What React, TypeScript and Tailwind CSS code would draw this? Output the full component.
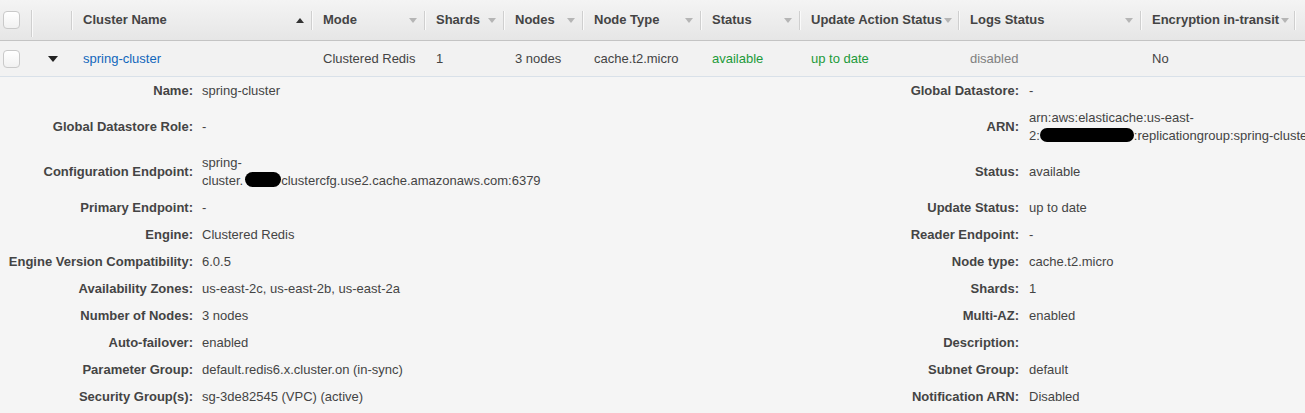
import React from "react";

const cols = [
  { w: 32, label: "", arrow: "none", kind: "check" },
  { w: 40, label: "", arrow: "none", kind: "blank" },
  { w: 240, label: "Cluster Name", arrow: "up" },
  { w: 113, label: "Mode", arrow: "down" },
  { w: 79, label: "Shards", arrow: "down" },
  { w: 79, label: "Nodes", arrow: "down" },
  { w: 118, label: "Node Type", arrow: "down" },
  { w: 99, label: "Status", arrow: "down" },
  { w: 159, label: "Update Action Status", arrow: "downTight" },
  { w: 182, label: "Logs Status", arrow: "down" },
  { w: 154, label: "Encryption in-transit", arrow: "downTight" },
];

function Checkbox() {
  return (
    <div className="w-[17px] h-[18px] rounded-[4px] border border-[#c9c9c9] bg-gradient-to-b from-white to-[#f1f1f1] shadow-[inset_0_1px_0_#fff]" />
  );
}

function DownArrow() {
  return (
    <div className="w-0 h-0 border-l-[4px] border-r-[4px] border-t-[5px] border-l-transparent border-r-transparent border-t-[#b5b5b5]" />
  );
}

function UpArrow() {
  return (
    <div className="w-0 h-0 border-l-[4px] border-r-[4px] border-b-[5px] border-l-transparent border-r-transparent border-b-[#333]" />
  );
}

function Sep({ tall }: { tall?: boolean }) {
  return (
    <div
      className={
        "w-px shrink-0 bg-[#cfcfcf] shadow-[1px_0_0_#fafafa] " +
        (tall ? "h-[27px] self-start mt-[10px]" : "h-[19px]")
      }
    />
  );
}

function Header() {
  return (
    <div className="flex h-[41px] items-center border-b border-[#c4c4c4] bg-gradient-to-b from-[#f4f4f4] to-[#e6e6e6]">
      {cols.map((c, i) => {
        if (c.kind === "check") {
          return (
            <div key={i} className="flex h-full items-center shrink-0" style={{ width: c.w }}>
              <div className="flex-1 flex pl-[3px]">
                <Checkbox />
              </div>
              <Sep tall />
            </div>
          );
        }
        if (c.kind === "blank") {
          return (
            <div key={i} className="flex h-full items-center shrink-0" style={{ width: c.w }}>
              <div className="flex-1" />
              <Sep />
            </div>
          );
        }
        return (
          <div key={i} className="flex h-full items-center shrink-0" style={{ width: c.w }}>
            <div className="flex-1 min-w-0 flex items-center pl-[11px] pr-[7px]">
              <span className="font-bold text-[#444] whitespace-nowrap">{c.label}</span>
              {c.arrow === "downTight" ? (
                <div className="ml-[2px]">
                  <DownArrow />
                </div>
              ) : (
                <>
                  <div className="flex-1" />
                  {c.arrow === "up" ? <UpArrow /> : <DownArrow />}
                </>
              )}
            </div>
            <Sep />
          </div>
        );
      })}
      <div className="flex-1" />
    </div>
  );
}

function Row() {
  const cell = "shrink-0 pl-[11px] whitespace-nowrap";
  return (
    <div className="flex h-[36px] items-center border-b border-[#d9e1e9] bg-[#f2f2f2]">
      <div className="shrink-0 w-[32px] pl-[3px]">
        <Checkbox />
      </div>
      <div className="shrink-0 w-[40px] flex justify-center pl-[1px]">
        <div className="w-0 h-0 border-l-[5px] border-r-[5px] border-t-[6px] border-l-transparent border-r-transparent border-t-[#222]" />
      </div>
      <div className={cell + " w-[240px] text-[#1166bb]"}>spring-cluster</div>
      <div className={cell + " w-[113px] pl-[10px]"}>Clustered Redis</div>
      <div className={cell + " w-[79px] pl-[10px]"}>1</div>
      <div className={cell + " w-[79px] pl-[10px]"}>3 nodes</div>
      <div className={cell + " w-[118px] pl-[10px]"}>cache.t2.micro</div>
      <div className={cell + " w-[99px] pl-[10px] text-[#1d9a3a]"}>available</div>
      <div className={cell + " w-[159px] pl-[10px] text-[#1d9a3a]"}>up to date</div>
      <div className={cell + " w-[182px] pl-[10px] text-[#808080]"}>disabled</div>
      <div className={cell + " w-[154px] pl-[10px]"}>No</div>
      <div className="flex-1" />
    </div>
  );
}

function Blob({ w, h }: { w: number; h: number }) {
  return (
    <span
      className="inline-block bg-black rounded-full align-middle"
      style={{ width: w, height: h, marginTop: -3 }}
    />
  );
}

type Pair = { label: string; value: React.ReactNode };

const left: Pair[] = [
  { label: "Name:", value: "spring-cluster" },
  { label: "Global Datastore Role:", value: "-" },
  {
    label: "Configuration Endpoint:",
    value: (
      <>
        spring-
        <br />
        cluster.
        <span className="ml-[2px]">
          <Blob w={36} h={15} />
        </span>
        clustercfg.use2.cache.amazonaws.com:6379
      </>
    ),
  },
  { label: "Primary Endpoint:", value: "-" },
  { label: "Engine:", value: "Clustered Redis" },
  { label: "Engine Version Compatibility:", value: "6.0.5" },
  { label: "Availability Zones:", value: "us-east-2c, us-east-2b, us-east-2a" },
  { label: "Number of Nodes:", value: "3 nodes" },
  { label: "Auto-failover:", value: "enabled" },
  { label: "Parameter Group:", value: "default.redis6.x.cluster.on (in-sync)" },
  { label: "Security Group(s):", value: "sg-3de82545 (VPC) (active)" },
];

const right: Pair[] = [
  { label: "Global Datastore:", value: "-" },
  {
    label: "ARN:",
    value: (
      <>
        arn:aws:elasticache:us-east-
        <br />
        2:
        <Blob w={94} h={14} />
        :replicationgroup:spring-cluster
      </>
    ),
  },
  { label: "Status:", value: "available" },
  { label: "Update Status:", value: "up to date" },
  { label: "Reader Endpoint:", value: "-" },
  { label: "Node type:", value: "cache.t2.micro" },
  { label: "Shards:", value: "1" },
  { label: "Multi-AZ:", value: "enabled" },
  { label: "Description:", value: "" },
  { label: "Subnet Group:", value: "default" },
  { label: "Notification ARN:", value: "Disabled" },
];

function Details() {
  const lab = "text-right font-bold text-[#444] whitespace-nowrap py-[4.5px] self-center";
  const val = "text-[#444] whitespace-nowrap py-[4.5px] self-center";
  return (
    <div className="grid grid-cols-[202px_500px_327px_1fr] bg-[#f5f5f5]">
      {left.map((l, i) => (
        <React.Fragment key={i}>
          <div className={lab + " pr-[9px]"}>{l.label}</div>
          <div className={val}>{l.value}</div>
          <div className={lab + " pr-[10px]"}>{right[i].label}</div>
          <div className={val}>{right[i].value || "\u00a0"}</div>
        </React.Fragment>
      ))}
    </div>
  );
}

export default function App() {
  return (
    <div
      className="w-[1305px] h-[413px] overflow-hidden bg-[#f5f5f5] text-[13px] leading-[18px] text-[#444]"
      style={{ fontFamily: '"Liberation Sans", Arial, Helvetica, sans-serif' }}
    >
      <Header />
      <Row />
      <Details />
    </div>
  );
}
